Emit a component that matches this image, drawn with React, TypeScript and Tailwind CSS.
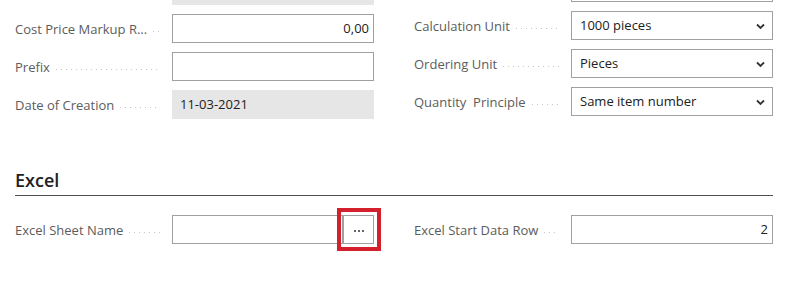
import React from "react";

const font = { fontFamily: '"Segoe UI", "Open Sans", "Noto Sans", sans-serif' };

function Label({ text }: { text: string }) {
  return (
    <div className="flex w-[157px] shrink-0 items-center pr-[12px]">
      <span className="whitespace-pre text-[13px] leading-[18px] text-[#5c5c5c]">{text}</span>
      <span className="ml-[6px] mt-[6px] h-[1px] flex-1 bg-[linear-gradient(to_right,#c8c8c8_1px,transparent_1px)] bg-[length:5px_1px] bg-repeat-x" />
    </div>
  );
}

function Chevron() {
  return (
    <svg width="9" height="7" viewBox="0 0 9 7" className="absolute right-[7px] top-[11px]">
      <path d="M1 1.5 L4.5 5 L8 1.5" fill="none" stroke="#333" strokeWidth="1.8" />
    </svg>
  );
}

function Input({ value, right }: { value?: string; right?: boolean }) {
  return (
    <div
      className={`flex h-[29px] w-[202px] items-center border border-[#a0a0a0] bg-white text-[13px] text-[#212121] ${
        right ? "justify-end pr-[4px]" : "pl-[8px]"
      }`}
    >
      {value}
    </div>
  );
}

function Select({ value }: { value: string }) {
  return (
    <div className="relative flex h-[29px] w-[202px] items-center border border-[#a0a0a0] bg-white pl-[8px] text-[13px] text-[#212121]">
      {value}
      <Chevron />
    </div>
  );
}

function Row({ label, children }: { label: string; children: React.ReactNode }) {
  return (
    <div className="flex h-[29px] items-center">
      <Label text={label} />
      {children}
    </div>
  );
}

export default function App() {
  return (
    <div className="relative h-[290px] w-[802px] overflow-hidden bg-white" style={font}>
      <div className="flex gap-[40px] pl-[15px]">
        <div className="flex flex-col gap-[9px]">
          <div className="ml-[157px] h-[5px] w-[202px] bg-[#e6e6e6]" />
          <Row label="Cost Price Markup R...">
            <Input value="0,00" right />
          </Row>
          <Row label="Prefix">
            <Input />
          </Row>
          <Row label="Date of Creation">
            <div className="flex h-[29px] w-[202px] items-center bg-[#e6e6e6] pl-[8px] text-[13px] text-[#212121]">
              11-03-2021
            </div>
          </Row>
        </div>
        <div className="flex flex-col gap-[9px]">
          <div className="ml-[157px] h-[2px] w-[202px] border-x border-b border-[#a0a0a0]" />
          <Row label="Calculation Unit">
            <Select value="1000 pieces" />
          </Row>
          <Row label="Ordering Unit">
            <Select value="Pieces" />
          </Row>
          <Row label="Quantity  Principle">
            <Select value="Same item number" />
          </Row>
        </div>
      </div>

      <div className="ml-[15px] mt-[49px] w-[758px] border-b border-[#505050] pb-[3px] text-[18px] font-semibold leading-[24px] text-[#212121]">
        Excel
      </div>

      <div className="mt-[19px] flex gap-[40px] pl-[15px]">
        <Row label="Excel Sheet Name">
          <div className="relative flex w-[202px]">
            <div className="h-[29px] flex-1 border border-[#a0a0a0] bg-white" />
            <div className="flex h-[29px] w-[31px] items-center justify-center gap-[2px] border border-[#a0a0a0] bg-white pt-[2px]">
              <span className="h-[2px] w-[2px] rounded-full bg-[#333]" />
              <span className="h-[2px] w-[2px] rounded-full bg-[#333]" />
              <span className="h-[2px] w-[2px] rounded-full bg-[#333]" />
            </div>
            <div className="absolute left-[165px] top-[-7px] h-[43px] w-[44px] border-[4px] border-[#d3202c]" />
          </div>
        </Row>
        <Row label="Excel Start Data Row">
          <Input value="2" right />
        </Row>
      </div>
    </div>
  );
}
